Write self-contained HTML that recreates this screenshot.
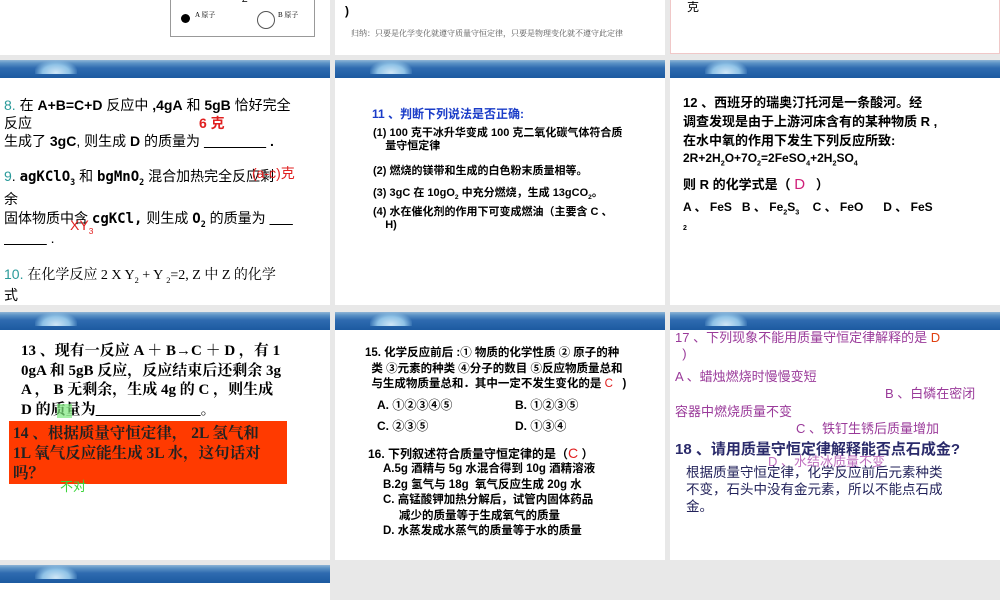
<!DOCTYPE html>
<html><head><meta charset="utf-8"><style>
body{margin:0;width:1000px;height:600px;background:#e8e8e8;position:relative;overflow:hidden;font-family:"Liberation Sans","Noto Sans CJK SC",sans-serif;}
.s{position:absolute;background:#fff;overflow:hidden}
.hb{position:absolute;left:0;right:0;top:0;height:18px;background:linear-gradient(#8fb4d6 0,#5d93c6 3px,#2f6bb0 8px,#1c5aa0 18px)}
.hb::after{content:"";position:absolute;left:35px;top:0;width:42px;height:14px;background:radial-gradient(ellipse at 50% 90%,#cfe6f6 0,#8fc2e6 45%,rgba(100,160,210,0) 75%)}
.a{position:absolute;white-space:nowrap}
.sf{font-family:"Liberation Serif","Noto Serif CJK SC",serif}
.mo{font-family:"DejaVu Sans Mono","Liberation Mono",monospace;font-weight:bold}
.b{font-weight:bold}
sub{font-size:60%}
</style></head><body>
<!-- row1 -->
<div class="s" style="left:0;top:0;width:330px;height:55px">
 <div class="a" style="left:170px;top:-2px;width:143px;height:37px;border:1px solid #999"></div>
 <div class="a" style="left:242px;top:-6px;font-size:9px">Z</div>
 <div class="a" style="left:181px;top:14px;width:9px;height:9px;border-radius:50%;background:#000"></div>
 <div class="a sf" style="left:195px;top:10px;font-size:7px">A 原子</div>
 <div class="a" style="left:257px;top:11px;width:16px;height:16px;border-radius:50%;border:1px solid #555"></div>
 <div class="a sf" style="left:278px;top:10px;font-size:7px">B 原子</div>
</div>
<div class="s" style="left:335px;top:0;width:330px;height:55px">
 <div class="a b" style="left:10px;top:4px;font-size:12px">)</div>
 <div class="a sf" style="left:16px;top:28px;font-size:8px;color:#555">归纳：只要是化学变化就遵守质量守恒定律，只要是物理变化就不遵守此定律</div>
</div>
<div class="s" style="left:670px;top:0;width:328px;height:53px;border:1px solid #f0c8c8;border-top:0">
 <div class="a" style="left:16px;top:-2px;font-size:12px">克</div>
</div>
<!-- row2 -->
<div class="s" style="left:0;top:60px;width:330px;height:245px"><div class="hb"></div>
 <div class="a" style="left:4px;top:35px;font-size:14px"><span style="color:#2a9a9a">8.</span> 在 <b>A+B=C+D</b> 反应中 <b>,4gA</b> 和 <b>5gB</b> 恰好完全</div>
 <div class="a" style="left:4px;top:53px;font-size:14px">反应</div>
 <div class="a" style="left:4px;top:71px;font-size:14px">生成了 <b>3gC</b>, 则生成 <b>D</b> 的质量为 <u>&nbsp;&nbsp;&nbsp;&nbsp;&nbsp;&nbsp;&nbsp;&nbsp;&nbsp;&nbsp;&nbsp;&nbsp;&nbsp;&nbsp;&nbsp;&nbsp;</u> <b>.</b></div>
 <div class="a b" style="left:199px;top:53px;font-size:14px;color:#e02020">6 克</div>
 <div class="a" style="left:4px;top:106px;font-size:14px"><span style="color:#2a9a9a">9</span>. <span class="mo">agKClO<sub>3</sub></span> 和 <span class="mo">bgMnO<sub>2</sub></span> 混合加热完全反应剩</div>
 <div class="a" style="left:4px;top:129px;font-size:14px">余</div>
 <div class="a" style="left:4px;top:148px;font-size:14px">固体物质中含 <span class="mo">cgKCl,</span> 则生成 <span class="mo">O<sub>2</sub></span> 的质量为 <u>&nbsp;&nbsp;&nbsp;&nbsp;&nbsp;&nbsp;</u></div>
 <div class="a" style="left:4px;top:170px;font-size:14px"><u>&nbsp;&nbsp;&nbsp;&nbsp;&nbsp;&nbsp;&nbsp;&nbsp;&nbsp;&nbsp;&nbsp;</u> .</div>
 <div class="a" style="left:252px;top:103px;font-size:14px;color:#e02020">(a-c)克</div>
 <div class="a" style="left:70px;top:157px;font-size:14px;color:#e02020">XY<sub>3</sub></div>
 <div class="a" style="left:4px;top:204px;font-size:14px"><span style="color:#2a9a9a">10.</span> <span class="sf">在化学反应 2 X Y<sub>2</sub> + Y <sub>2</sub>=2, Z 中 Z 的化学</span></div>
 <div class="a" style="left:4px;top:225px;font-size:14px">式</div>
</div>
<div class="s" style="left:335px;top:60px;width:330px;height:245px"><div class="hb"></div>
 <div class="a b" style="left:37px;top:45px;font-size:12px;color:#1a3cc8">11 、判断下列说法是否正确:</div>
 <div class="a b" style="left:38px;top:67px;font-size:11px;line-height:13px">(1) 100 克干冰升华变成 100 克二氧化碳气体符合质<br>&nbsp;&nbsp;&nbsp;&nbsp;量守恒定律</div>
 <div class="a b" style="left:38px;top:102px;font-size:11px">(2) 燃烧的镁带和生成的白色粉末质量相等。</div>
 <div class="a b" style="left:38px;top:124px;font-size:11px">(3) 3gC 在 10gO<sub>2</sub> 中充分燃烧，生成 13gCO<sub>2</sub>。</div>
 <div class="a b" style="left:38px;top:146px;font-size:11px;line-height:13px">(4) 水在催化剂的作用下可变成燃油（主要含 C 、<br>&nbsp;&nbsp;&nbsp;&nbsp;H)</div>
</div>
<div class="s" style="left:670px;top:60px;width:330px;height:245px"><div class="hb"></div>
 <div class="a b" style="left:13px;top:33px;font-size:13px;line-height:19px">12 、西班牙的瑞奥汀托河是一条酸河。经<br>调查发现是由于上游河床含有的某种物质 R ,<br>在水中氧的作用下发生下列反应所致:</div>
 <div class="a b" style="left:13px;top:91px;font-size:12px">2R+2H<sub>2</sub>O+7O<sub>2</sub>=2FeSO<sub>4</sub>+2H<sub>2</sub>SO<sub>4</sub></div>
 <div class="a b" style="left:13px;top:114px;font-size:13px">则 R 的化学式是（ <span style="color:#d0207a;font-weight:normal;font-size:15px">D</span> &nbsp;&nbsp;）</div>
 <div class="a b" style="left:13px;top:138px;font-size:12px">A 、 FeS &nbsp;&nbsp;B 、 Fe<sub>2</sub>S<sub>3</sub> &nbsp;&nbsp;&nbsp;C 、 FeO &nbsp;&nbsp;&nbsp;&nbsp;&nbsp;D 、 FeS</div>
 <div class="a b" style="left:13px;top:165px;font-size:7px">2</div>
</div>
<!-- row3 -->
<div class="s" style="left:0;top:312px;width:330px;height:248px"><div class="hb"></div>
 <div class="a b sf" style="left:21px;top:30px;font-size:15px;line-height:19.5px">13 、现有一反应 A ＋ B→C ＋ D ，有 1<br>0gA 和 5gB 反应，反应结束后还剩余 3g<br>A ， B 无剩余，生成 4g 的 C ，则生成<br>D 的质量为<u>&nbsp;&nbsp;&nbsp;&nbsp;&nbsp;&nbsp;&nbsp;&nbsp;&nbsp;&nbsp;&nbsp;&nbsp;&nbsp;&nbsp;&nbsp;&nbsp;&nbsp;&nbsp;&nbsp;&nbsp;&nbsp;&nbsp;&nbsp;&nbsp;&nbsp;&nbsp;&nbsp;&nbsp;</u>。</div>
 <div class="a" style="left:57px;top:92px;width:15px;height:14px;background:#7de87d;opacity:.7"></div>
 <div class="a b sf" style="left:9px;top:109px;width:278px;height:63px;background:#ff3a00;font-size:15.5px;line-height:20px;padding:3px 2px 3px 4px;box-sizing:border-box;color:#222;white-space:nowrap">14 、根据质量守恒定律， 2L 氢气和<br>1L 氧气反应能生成 3L 水，这句话对<br>吗？</div>
 <div class="a" style="left:60px;top:164px;font-size:13px;color:#3ad43a">不对</div>
</div>
<div class="s" style="left:335px;top:312px;width:330px;height:248px"><div class="hb"></div>
 <div class="a b" style="left:30px;top:34px;font-size:11.5px;line-height:15.5px">15. 化学反应前后 :① 物质的化学性质 ② 原子的种<br>&nbsp;&nbsp;类 ③元素的种类 ④分子的数目 ⑤反应物质量总和<br>&nbsp;&nbsp;与生成物质量总和．其中一定不发生变化的是 <span style="color:#e02020;font-weight:normal">C</span>&nbsp;&nbsp; )</div>
 <div class="a b" style="left:42px;top:84px;font-size:12px">A. ①②③④⑤</div>
 <div class="a b" style="left:180px;top:84px;font-size:12px">B. ①②③⑤</div>
 <div class="a b" style="left:42px;top:105px;font-size:12px">C. ②③⑤</div>
 <div class="a b" style="left:180px;top:105px;font-size:12px">D. ①③④</div>
 <div class="a b" style="left:33px;top:133px;font-size:12px">16. 下列叙述符合质量守恒定律的是（<span style="color:#e02020;font-weight:normal;font-size:14px">C</span> ）</div>
 <div class="a b" style="left:48px;top:150px;font-size:11.5px;line-height:15.5px">A.5g 酒精与 5g 水混合得到 10g 酒精溶液<br>B.2g 氢气与 18g &nbsp;氧气反应生成 20g 水<br>C. 高锰酸钾加热分解后，试管内固体药品<br>&nbsp;&nbsp;&nbsp;&nbsp;&nbsp;减少的质量等于生成氧气的质量<br>D. 水蒸发成水蒸气的质量等于水的质量</div>
</div>
<div class="s" style="left:670px;top:312px;width:330px;height:248px"><div class="hb"></div>
 <div class="a" style="left:5px;top:18px;font-size:13px;color:#9a3a9a;line-height:16px">17 、下列现象不能用质量守恒定律解释的是 <span style="color:#e04010">D</span><br>&nbsp;&nbsp;)</div>
 <div class="a" style="left:5px;top:54px;font-size:13px;color:#9a3a9a">A 、蜡烛燃烧时慢慢变短</div>
 <div class="a" style="left:215px;top:71px;font-size:13px;color:#9a3a9a">B 、白磷在密闭</div>
 <div class="a" style="left:5px;top:89px;font-size:13px;color:#9a3a9a">容器中燃烧质量不变</div>
 <div class="a" style="left:126px;top:106px;font-size:13px;color:#9a3a9a">C 、铁钉生锈后质量增加</div>
 <div class="a" style="left:98px;top:139px;font-size:13px;color:#c070c0">D 、水结冰质量不变</div>
 <div class="a b" style="left:5px;top:126px;font-size:15px;color:#2a2a6a">18 、请用质量守恒定律解释能否点石成金?</div>
 <div class="a" style="left:16px;top:152px;font-size:13.5px;color:#22225a;line-height:17px">根据质量守恒定律，化学反应前后元素种类<br>不变，石头中没有金元素，所以不能点石成<br>金。</div>
</div>
<!-- row4 -->
<div class="s" style="left:0;top:565px;width:330px;height:35px"><div class="hb"></div></div>
</body></html>
